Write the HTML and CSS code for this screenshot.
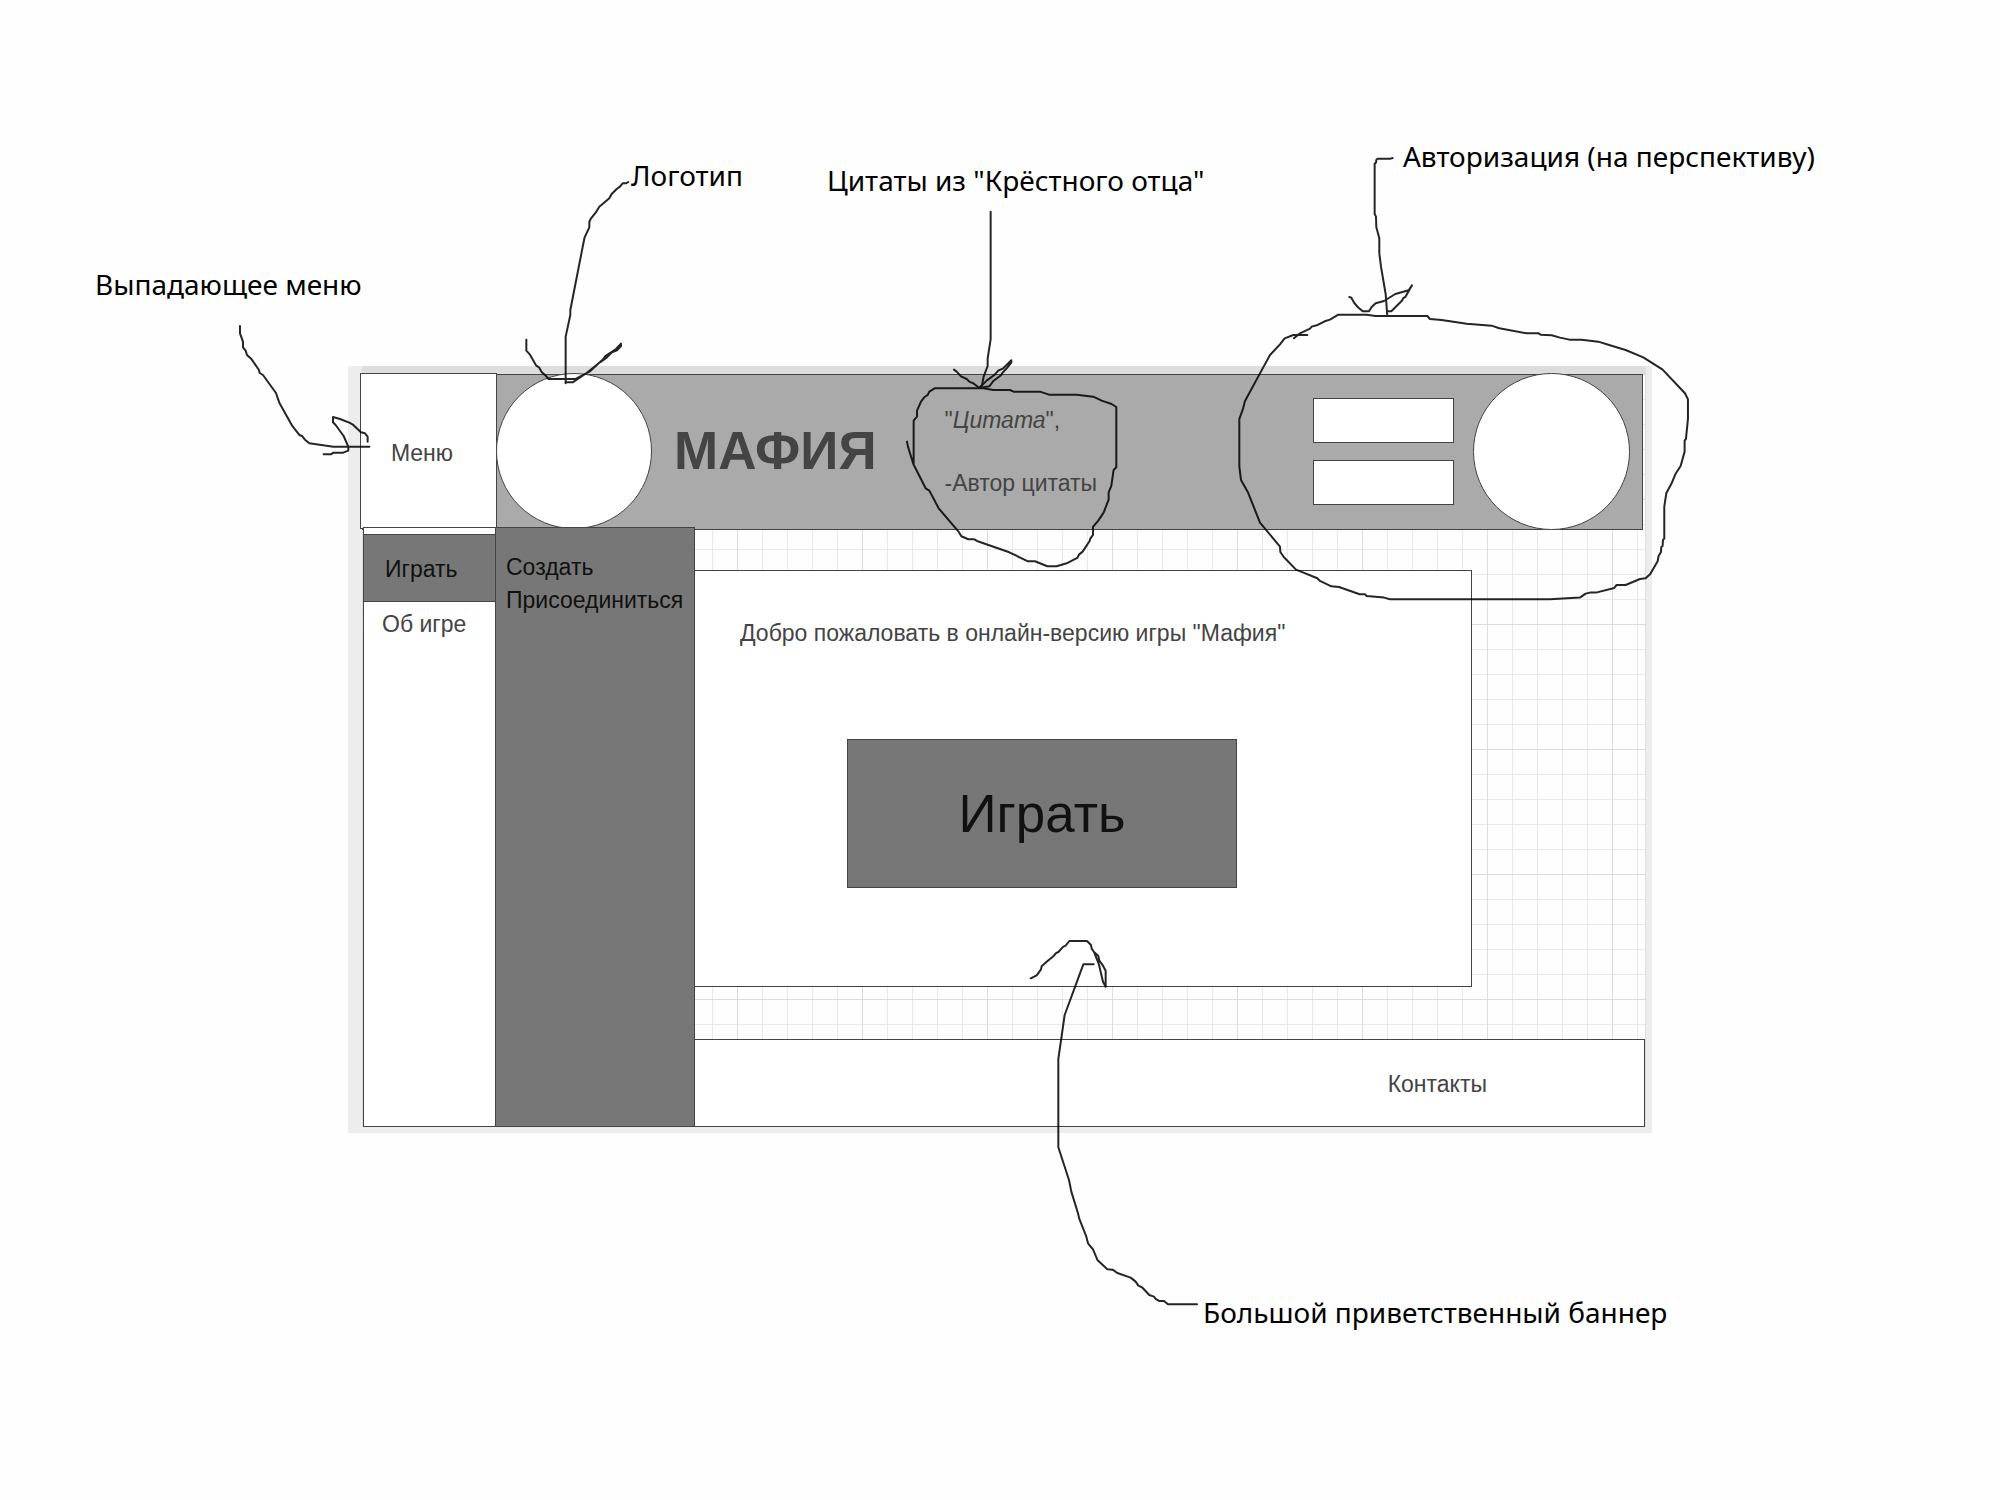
FILE: index.html
```html
<!DOCTYPE html>
<html lang="ru">
<head>
  <meta charset="utf-8">
  <title>Мафия</title>
  <link rel="stylesheet" href="styles.css">
</head>
<body>
  <div class="canvas">
    <div class="frame">
      <div class="paper">
        <header class="header">
          <button class="menu-button" type="button">Меню</button>
          <div class="logo"></div>
          <h1 class="title">МАФИЯ</h1>
          <blockquote class="quote">
            <p>"<em>Цитата</em>",</p>
            <p>-Автор цитаты</p>
          </blockquote>
          <form class="login">
            <input class="login-field" type="text" aria-label="Логин">
            <input class="login-field" type="password" aria-label="Пароль">
          </form>
          <div class="avatar"></div>
        </header>
        <div class="body">
          <nav class="menu">
            <a class="menu-item menu-item-active" href="#play">Играть</a>
            <a class="menu-item" href="#about">Об игре</a>
          </nav>
          <nav class="submenu">
            <a class="submenu-item" href="#create">Создать</a>
            <a class="submenu-item" href="#join">Присоединиться</a>
          </nav>
          <div class="content">
            <main class="banner">
              <p class="welcome">Добро пожаловать в онлайн-версию игры "Мафия"</p>
              <button class="play-button" type="button">Играть</button>
            </main>
            <footer class="footer"><a class="contacts" href="#contacts">Контакты</a></footer>
          </div>
        </div>
      </div>
    </div>

    <svg class="arrows" viewBox="0 0 2000 1500" aria-hidden="true">
      <g transform="translate(60 240) scale(.3333)">
        <path d="M540 258V280L549 305V322L557 332L561 345L575 358L597 390L599 399L609 405L648 459L658 488L697 558L718 585L726 588L735 599L748 610L820 620H928"/>
        <path d="M923 605V590L915 580L903 577L880 555L868 548L840 537L819 531V547L827 555L851 588L865 620V632L850 638H820L813 643H791"/>
      </g>
      <g transform="translate(480 120) scale(.3333)">
        <path d="M445 186L438 190H428L420 200L410 207L395 222L388 235L358 260L347 278L332 297L328 306V322L314 352L309 376L271 570V585L257 650V790"/>
        <path d="M139 659V692L150 704L168 736L177 742L185 756L198 768L205 777H287L330 754L370 717L376 708L408 687L423 671V678L411 691L396 697L380 713L360 727L320 759L278 787H257"/>
      </g>
      <g transform="translate(800 140) scale(.3333)">
        <path d="M572 215V598L563 655V678L551 710L546 736L538 744"/>
        <path d="M462 689L470 695L483 709L500 717L508 725L520 730L538 744L560 722L582 706L595 692L610 685L634 661V668L620 685L607 699L603 706L580 723L568 739L538 744"/>
        <path d="M321 905L324 920L340 972L377 1045L388 1052L416 1105L475 1174L484 1189L505 1198H523L531 1203L628 1237L684 1264H705L742 1279H770L800 1270L832 1254L837 1244L848 1235L869 1203L871 1196L879 1185V1161L895 1142L911 1118L926 1079V1057L934 1038L941 990L949 982V801L935 792L905 782L880 770L830 764H747L720 755H641L630 750H580L550 745H404L388 755L383 765L374 771L363 785L351 812V830L341 842V970"/>
      </g>
      <g transform="translate(1220 120) scale(.3333)">
        <path d="M518 114L512 116H473L469 120L468 128L464 131V282L468 290L469 322L478 355V400L483 440L497 522L502 588"/>
        <path d="M388 531L394 533L403 549L414 562L428 574H447L455 561L467 550L492 543L526 522L566 511L576 496L556 531L549 535L547 541L514 574H504"/>
        <path d="M262 645H220L194 655L180 673L150 705L131 740L113 773L75 843L68 870L58 897V1040L63 1080L83 1115L120 1208L180 1280L181 1296L192 1312L228 1349L292 1375L300 1383L334 1399L357 1401L419 1423H435L440 1428L492 1433L510 1438H990L1080 1433L1097 1421L1110 1418H1128L1183 1404L1190 1395H1217L1260 1377L1277 1375L1291 1362L1313 1324L1316 1308L1323 1296L1324 1281L1328 1278L1329 1260L1333 1256V1160L1339 1120L1355 1090L1366 1063L1382 1038L1394 995V962L1398 957L1404 897V838L1395 820L1328 749L1270 712L1217 690L1170 676L1135 665L1085 659H1048L1020 653L995 646L962 644L956 640H920L838 625L815 617L740 611L665 600L630 597L622 588H467L440 584H355L330 599L314 604L293 615L275 620L270 626L240 640L222 655"/>
      </g>
      <g transform="translate(1000 900) scale(.3333)">
        <path d="M281 193H250L194 345L175 477V742L207 840L214 875L234 940L238 957L259 1010L264 1030L279 1048L293 1081L322 1108L338 1109L352 1119L392 1133L407 1145L415 1157L426 1162L448 1185L462 1190L467 1197L477 1203H492L504 1213H591"/>
        <path d="M92 235L110 226L123 208L125 199L140 185L162 167L167 160L175 156L190 140L197 137L208 123H261L273 135L275 146L282 156L297 194L309 245L317 260V212L309 197L298 182L295 168L282 156"/>
      </g>
    </svg>

    <p class="note note-menu">Выпадающее меню</p>
    <p class="note note-logo">Логотип</p>
    <p class="note note-quotes">Цитаты из "Крёстного отца"</p>
    <p class="note note-login">Авторизация (на перспективу)</p>
    <p class="note note-banner">Большой приветственный баннер</p>
  </div>
</body>
</html>
```
FILE: styles.css
```css
* {
  box-sizing: border-box;
}

body {
  margin: 0;
  background: #fefefe;
  color: #444;
  font-family: "Liberation Sans", Arial, sans-serif;
  font-size: 23px;
  line-height: 32px;
}

p,
h1,
blockquote {
  margin: 0;
}

a {
  color: inherit;
  text-decoration: none;
}

button {
  font: inherit;
  color: inherit;
  padding: 0;
}

.canvas {
  position: relative;
  padding: 366px 348px;
}

.frame {
  padding: 0 6px 6px 14px;
  background: #ededed;
}

.paper {
  border: solid #ddd;
  border-width: 8px 1px 0 0;
  background-color: #fefefe;
  background-image:
    linear-gradient(90deg, #ddd 1px, transparent 1px),
    linear-gradient(#ddd 1px, transparent 1px),
    linear-gradient(90deg, #e9e9e9 1px, transparent 1px),
    linear-gradient(#e9e9e9 1px, transparent 1px);
  background-size: 125px 125px, 125px 125px, 25px 25px, 25px 25px;
}

.header {
  display: flex;
  align-items: center;
  height: 156px;
  margin-right: 2px;
  padding: 0 12px 2px 0;
  border: 1px solid #444;
  background: #aaa;
}

.menu-button {
  width: 137px;
  height: 156px;
  margin-left: -3px;
  padding: 4px 13px 0 0;
  border: 1px solid #444;
  background: #fff;
}

.logo,
.avatar {
  width: 156px;
  height: 156px;
  border: 1px solid #444;
  border-radius: 50%;
  background: #fff;
}

.logo {
  margin-left: -1px;
}

.avatar {
  width: 157px;
  height: 157px;
  margin-top: 1px;
}

.title {
  margin-left: 22px;
  font-size: 53px;
  line-height: 60px;
}

.quote {
  display: flex;
  flex-direction: column;
  gap: 31px;
  margin: 0 auto 0 68px;
}

.login {
  display: flex;
  flex-direction: column;
  gap: 17px;
  margin-right: 19px;
}

.login-field {
  width: 141px;
  height: 45px;
  border: 1px solid #444;
  border-radius: 0;
  background: #fff;
  font: inherit;
}

.body {
  display: grid;
  grid-template-columns: 132px 200px 1fr;
  margin: -3px 0 0 1px;
}

.menu,
.submenu {
  height: 600px;
  border: 1px solid #444;
}

.menu {
  padding-top: 6px;
  border-right: 0;
  background: #fff;
}

.menu-item {
  display: block;
  padding: 6px 18px;
}

.menu-item-active {
  padding: 18px 21px 16px;
  border: solid #444;
  border-width: 1px 0;
  background: #777;
  color: #111;
}

.submenu {
  padding: 23px 10px;
  background: #777;
  color: #111;
}

.submenu-item {
  display: block;
  line-height: 33px;
}

.content {
  display: flex;
  flex-direction: column;
  justify-content: space-between;
  padding-top: 43px;
}

.banner {
  height: 417px;
  margin-right: 173px;
  padding: 46px 0 0 45px;
  border: solid #444;
  border-width: 1px 1px 1px 0;
  background: #fff;
}

.play-button {
  display: block;
  width: 390px;
  height: 149px;
  margin: 90px 0 0 107px;
  border: 1px solid #444;
  background: #777;
  color: #111;
  font-size: 53px;
}

.footer {
  height: 88px;
  padding: 28px 157px;
  border: solid #444;
  border-width: 1px 1px 1px 0;
  background: #fff;
  text-align: right;
}

.arrows {
  position: absolute;
  top: 0;
  left: 0;
  width: 2000px;
  height: 1500px;
  pointer-events: none;
  fill: none;
  stroke: #000;
  stroke-width: 6;
  stroke-linecap: round;
  stroke-linejoin: round;
  opacity: .85;
}

.note {
  position: absolute;
  color: #000;
  font-family: "Noto Sans", "Open Sans", sans-serif;
  font-size: 28px;
  line-height: 40px;
  white-space: nowrap;
}

.note-menu {
  top: 264px;
  left: 95px;
}

.note-logo {
  top: 155px;
  left: 631px;
}

.note-quotes {
  top: 160px;
  left: 827px;
}

.note-login {
  top: 136px;
  left: 1403px;
}

.note-banner {
  top: 1292px;
  left: 1203px;
}
```
